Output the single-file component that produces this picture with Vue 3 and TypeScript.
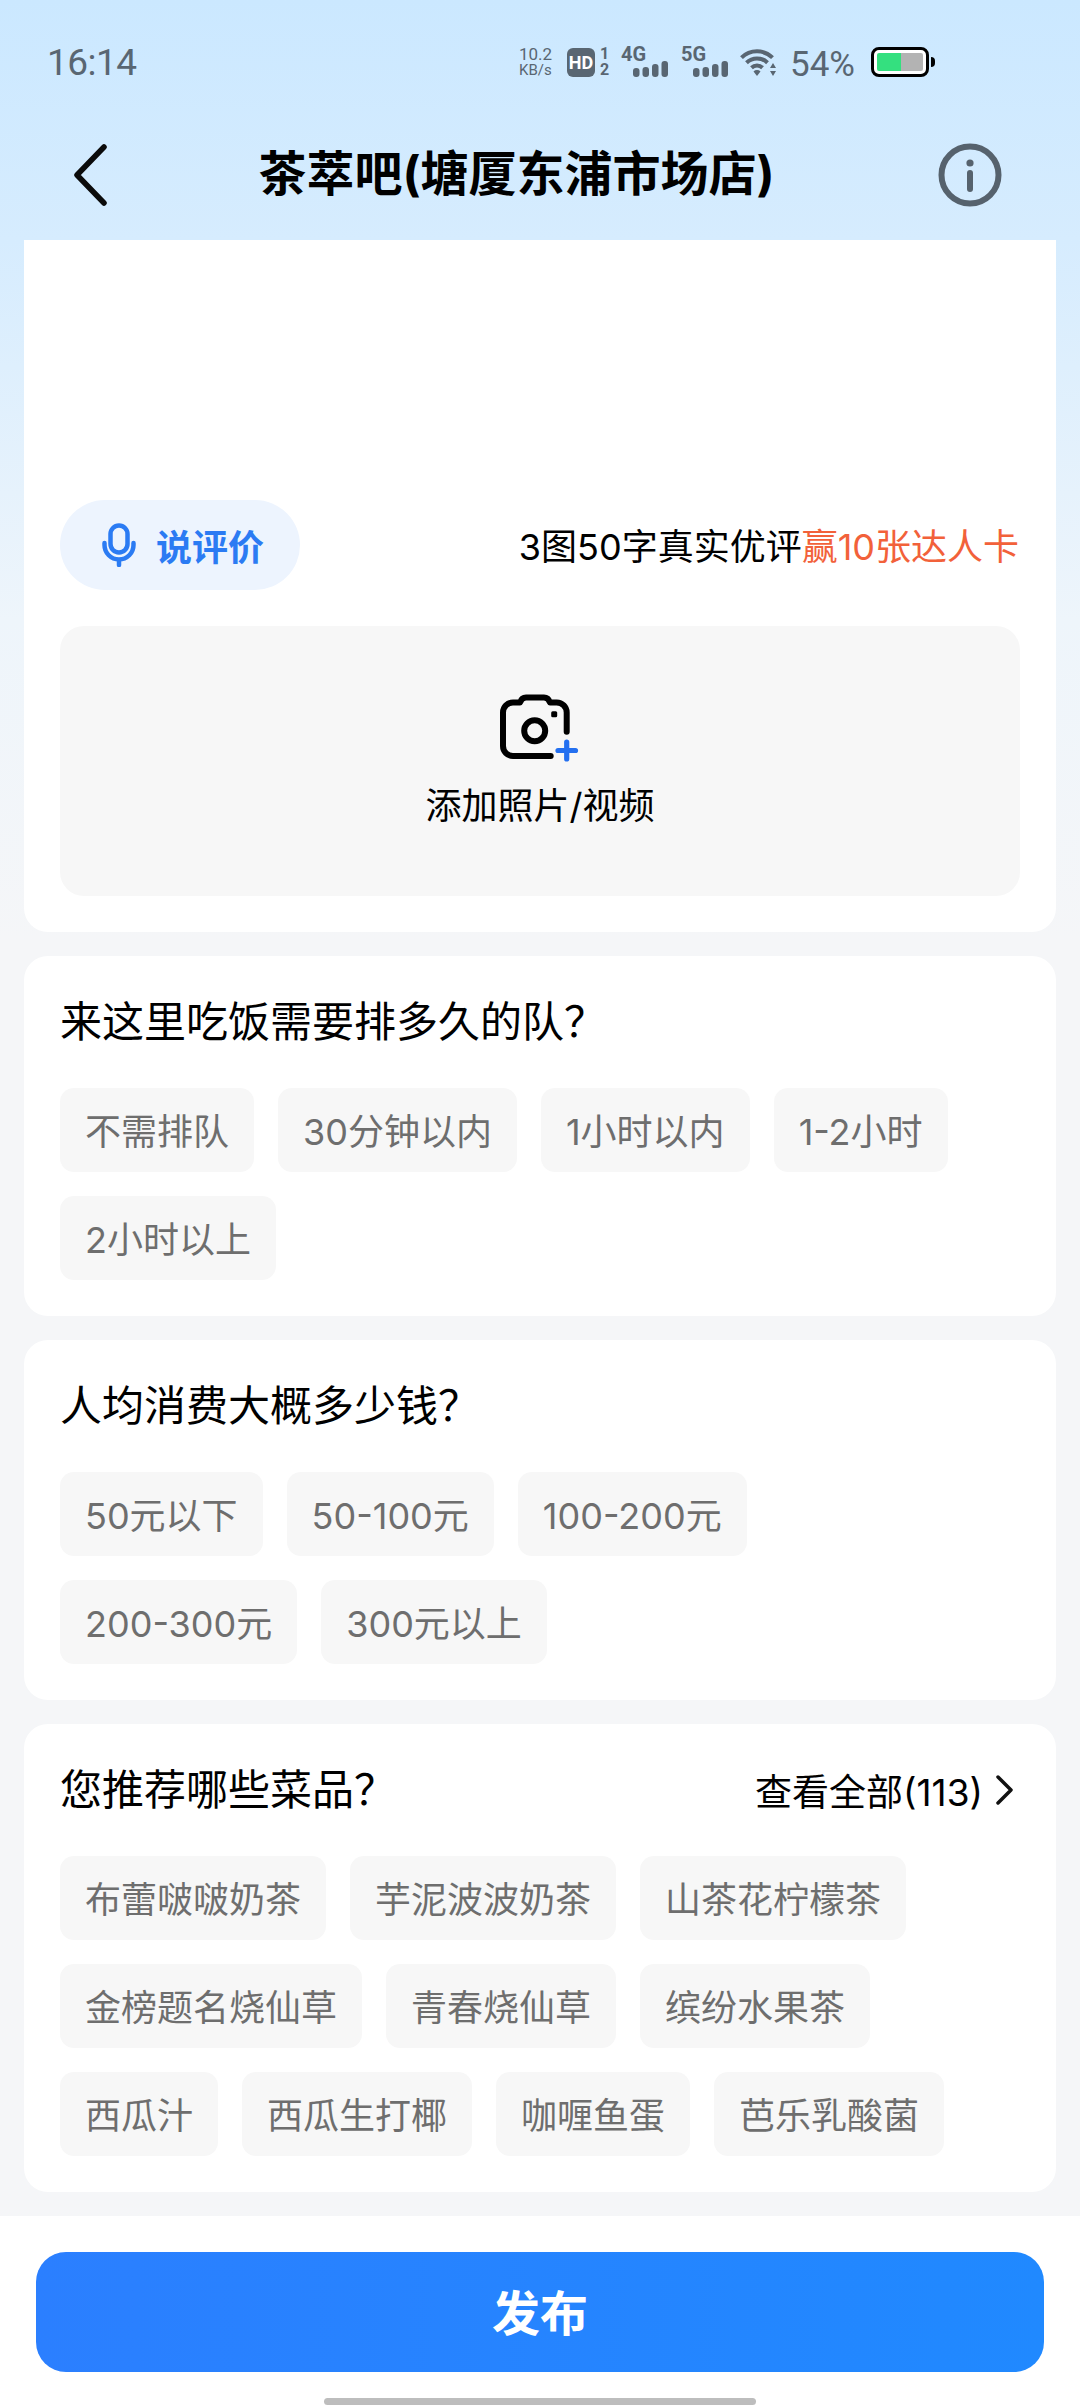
<script setup lang="ts">
const queueOptions = ['不需排队', '30分钟以内', '1小时以内', '1-2小时', '2小时以上']
const priceOptions = ['50元以下', '50-100元', '100-200元', '200-300元', '300元以上']
const dishOptions = [
  '布蕾啵啵奶茶', '芋泥波波奶茶', '山茶花柠檬茶',
  '金榜题名烧仙草', '青春烧仙草', '缤纷水果茶',
  '西瓜汁', '西瓜生打椰', '咖喱鱼蛋', '芭乐乳酸菌',
]
const signals = ['4G', '5G']
</script>

<template>
  <div class="page">
    <header class="status-bar">
      <span class="time">16:14</span>
      <div class="status-right">
        <div class="speed"><span>10.2</span><span class="speed-unit">KB/s</span></div>
        <div class="hd-wrap">
          <span class="hd">HD</span>
          <div class="sim"><span>1</span><span>2</span></div>
        </div>
        <div v-for="s in signals" :key="s" class="signal">
          <span class="signal-label">{{ s }}</span>
          <svg class="bars" width="36" height="16" viewBox="0 0 36 16">
            <rect x="0" y="7" width="6.5" height="9" rx="3" />
            <rect x="9.5" y="6" width="6.5" height="10" rx="3" />
            <rect x="19" y="3" width="6.5" height="13" rx="3" />
            <rect x="28.5" y="0" width="6.5" height="16" rx="3" />
          </svg>
        </div>
        <svg class="wifi" width="37" height="29" viewBox="0 0 37 29">
          <path d="M1.5 9.7a22 22 0 0 1 31 0M6.5 14.7a15 15 0 0 1 21 0M11.5 19.7a8 8 0 0 1 11 0" fill="none" stroke="#596672" stroke-width="4" />
          <path d="M13.5 23.5a5 5 0 0 1 7 0L17 28z" fill="#596672" />
          <path d="M33 15l3 5h-6zM33 28l3-5h-6z" fill="#596672" />
        </svg>
        <span class="percent">54%</span>
        <div class="battery-wrap">
          <div class="battery">
            <div class="battery-level"></div>
          </div>
          <span class="battery-nub"></span>
        </div>
      </div>
    </header>

    <nav class="nav">
      <svg class="back" width="36" height="62" viewBox="0 0 36 62">
        <path d="M32 3L5 31l27 28" fill="none" stroke="#0b0b0b" stroke-width="5.5" stroke-linecap="round" stroke-linejoin="round" />
      </svg>
      <h1 class="title">茶萃吧(塘厦东浦市场店)</h1>
      <svg class="info" width="64" height="64" viewBox="0 0 64 64">
        <circle cx="32" cy="32" r="28.5" fill="none" stroke="#56626d" stroke-width="6" />
        <circle cx="32" cy="20" r="3.6" fill="#56626d" />
        <path d="M32 30v16" stroke="#56626d" stroke-width="6" stroke-linecap="round" />
      </svg>
    </nav>

    <main class="content">
      <section class="card editor">
        <div class="editor-space"></div>
        <div class="voice-row">
          <div class="voice-btn">
            <svg width="34" height="44" viewBox="0 0 34 44">
              <rect x="8.5" y="2.5" width="17" height="27" rx="8.5" fill="none" stroke="#2b7bf3" stroke-width="4.5" />
              <path d="M2.5 20v2a14.5 14.5 0 0 0 29 0v-2M17 37v5" fill="none" stroke="#2b7bf3" stroke-width="4.5" stroke-linecap="round" />
            </svg>
            <span>说评价</span>
          </div>
          <p class="reward">3图50字真实优评<span class="reward-hot">赢10张达人卡</span></p>
        </div>
        <div class="upload">
          <svg width="84" height="76" viewBox="0 0 84 76">
            <path d="M67.7 41.7V22.5a10 10 0 0 0-10-10H51c-1-3-3-5-6-5H27c-3 0-5 2-6 5h-7a10 10 0 0 0-10 10V56a10 10 0 0 0 10 10h37.7" fill="none" stroke="#000" stroke-width="6" stroke-linecap="round" stroke-linejoin="round" />
            <circle cx="35.7" cy="40.7" r="10.5" fill="none" stroke="#000" stroke-width="6" />
            <rect x="52.2" y="21.2" width="6" height="6" rx="1.5" />
            <path d="M67.7 52v17M59 60.5h17.5" stroke="#2470f0" stroke-width="5.2" stroke-linecap="round" />
          </svg>
          <span class="upload-label">添加照片/视频</span>
        </div>
      </section>

      <section class="card">
        <div class="card-head"><h2>来这里吃饭需要排多久的队？</h2></div>
        <div class="chips">
          <span v-for="o in queueOptions" :key="o" class="chip">{{ o }}</span>
        </div>
      </section>

      <section class="card">
        <div class="card-head"><h2>人均消费大概多少钱？</h2></div>
        <div class="chips">
          <span v-for="o in priceOptions" :key="o" class="chip">{{ o }}</span>
        </div>
      </section>

      <section class="card">
        <div class="card-head">
          <h2>您推荐哪些菜品？</h2>
          <div class="see-all">
            <span>查看全部(113)</span>
            <svg width="20" height="32" viewBox="0 0 20 32">
              <path d="M3 3l13 13L3 29" fill="none" stroke="#111" stroke-width="3.5" stroke-linecap="round" stroke-linejoin="round" />
            </svg>
          </div>
        </div>
        <div class="chips">
          <span v-for="o in dishOptions" :key="o" class="chip">{{ o }}</span>
        </div>
      </section>
    </main>

    <footer class="footer">
      <button class="publish" type="button">发布</button>
      <div class="home-bar"></div>
    </footer>
  </div>
</template>

<style>
html, body {
  margin: 0;
  background: #f5f6f8;
}
</style>

<style scoped>
.page {
  width: 1080px;
  height: 2408px;
  display: flex;
  flex-direction: column;
  overflow: hidden;
  background: linear-gradient(180deg, #cbe8ff 0, #d6ecfe 240px, #eef5fb 620px, #f5f6f8 940px);
  font-family: Inter, "Noto Sans CJK SC", sans-serif;
  color: #000;
}

/* status bar */
.status-bar {
  flex: none;
  height: 96px;
  padding: 14px 145px 0 47px;
  display: flex;
  align-items: center;
  justify-content: space-between;
  color: #596672;
  font-family: Roboto, sans-serif;
}

.time {
  font-size: 37px;
  letter-spacing: -0.5px;
}

.status-right {
  display: flex;
  align-items: center;
}

.speed {
  width: 48px;
  display: flex;
  flex-direction: column;
  align-items: flex-start;
  font-size: 17px;
  line-height: 16px;
}

.speed-unit {
  font-size: 15px;
}

.hd-wrap {
  display: flex;
  align-items: center;
  gap: 5px;
  width: 54px;
}

.hd {
  width: 28px;
  height: 29px;
  border-radius: 6px;
  background: #596672;
  color: #fff;
  font-size: 18px;
  font-weight: 700;
  line-height: 29px;
  text-align: center;
}

.sim {
  display: flex;
  flex-direction: column;
  font-size: 16px;
  font-weight: 700;
  line-height: 16px;
}

.signal {
  width: 60px;
  display: flex;
  flex-direction: column;
}

.signal-label {
  font-size: 20px;
  font-weight: 700;
  line-height: 14px;
}

.bars {
  margin-left: 12px;
  fill: #596672;
}

.wifi {
  margin-left: -1px;
}

.percent {
  margin-left: 13px;
  padding-top: 5px;
  font-size: 35px;
}

.battery-wrap {
  display: flex;
  align-items: center;
  margin-left: 16px;
}

.battery {
  box-sizing: border-box;
  width: 58px;
  height: 30px;
  padding: 3px;
  border: 3px solid #000;
  border-radius: 8px;
  background: #fff;
  overflow: hidden;
}

.battery-level {
  height: 100%;
  background: linear-gradient(90deg, #34e07f 0 52%, #b3b3b3 52% 100%);
  border-radius: 2px;
}

.battery-nub {
  width: 4px;
  height: 10px;
  margin-left: 2px;
  background: #000;
  border-radius: 0 4px 4px 0;
}

/* nav */
.nav {
  flex: none;
  height: 130px;
  padding: 0 78px 0 72px;
  display: flex;
  align-items: center;
  justify-content: space-between;
}

.title {
  margin: 0 0 2px -13px;
  font-size: 48px;
  font-weight: 700;
  line-height: 60px;
  color: #000;
  white-space: nowrap;
}

/* content */
.content {
  flex: 1;
  min-height: 0;
  padding: 0 24px;
  display: flex;
  flex-direction: column;
  gap: 24px;
}

.card {
  padding: 36px;
  background: #fff;
  border-radius: 24px;
}

.editor {
  height: 692px;
  box-sizing: border-box;
  padding-top: 0;
  border-radius: 0 0 24px 24px;
}

.editor-space {
  height: 260px;
}

.voice-row {
  display: flex;
  align-items: center;
  justify-content: space-between;
  height: 90px;
}

.voice-btn {
  box-sizing: border-box;
  width: 240px;
  height: 90px;
  padding-left: 42px;
  display: flex;
  align-items: center;
  gap: 20px;
  background: #edf4fe;
  border-radius: 45px;
  color: #2b7bf3;
  font-size: 36px;
  font-weight: 700;
}

.reward {
  margin: 0 1px 0 0;
  padding-top: 4px;
  font-size: 36px;
  line-height: 50px;
}

.reward-hot {
  color: #f2613a;
}

.upload {
  height: 270px;
  margin-top: 36px;
  display: flex;
  flex-direction: column;
  align-items: center;
  padding-top: 64px;
  box-sizing: border-box;
  background: #f7f7f7;
  border-radius: 24px;
}

.upload svg {
  margin-left: 2px;
}

.upload-label {
  margin-top: 15px;
  font-size: 36px;
  line-height: 50px;
}

.card-head {
  height: 60px;
  margin-bottom: 36px;
  display: flex;
  align-items: center;
  justify-content: space-between;
}

.card-head h2 {
  margin: 0;
  font-size: 42px;
  font-weight: 400;
  line-height: 60px;
}

.see-all {
  display: flex;
  align-items: center;
  gap: 12px;
  margin-right: 5px;
  font-size: 37px;
}

.chips {
  display: flex;
  flex-wrap: wrap;
  gap: 24px;
  padding-right: 20px;
}

.chip {
  height: 84px;
  padding: 0 25px;
  background: #f7f7f7;
  border-radius: 14px;
  color: #6e6e6e;
  font-size: 36px;
  line-height: 88px;
}

/* footer */
.footer {
  flex: none;
  height: 192px;
  box-sizing: border-box;
  padding: 36px 36px 0;
  background: #fff;
}

.publish {
  display: block;
  width: 100%;
  height: 120px;
  padding: 0 0 4px;
  border: 0;
  border-radius: 30px;
  background: linear-gradient(90deg, #2b7fff, #2089ff);
  color: #fff;
  font-family: inherit;
  font-size: 48px;
  font-weight: 700;
}

.home-bar {
  width: 432px;
  height: 7px;
  margin: 26px auto 0;
  background: #bdbdbd;
  border-radius: 4px;
}
</style>
